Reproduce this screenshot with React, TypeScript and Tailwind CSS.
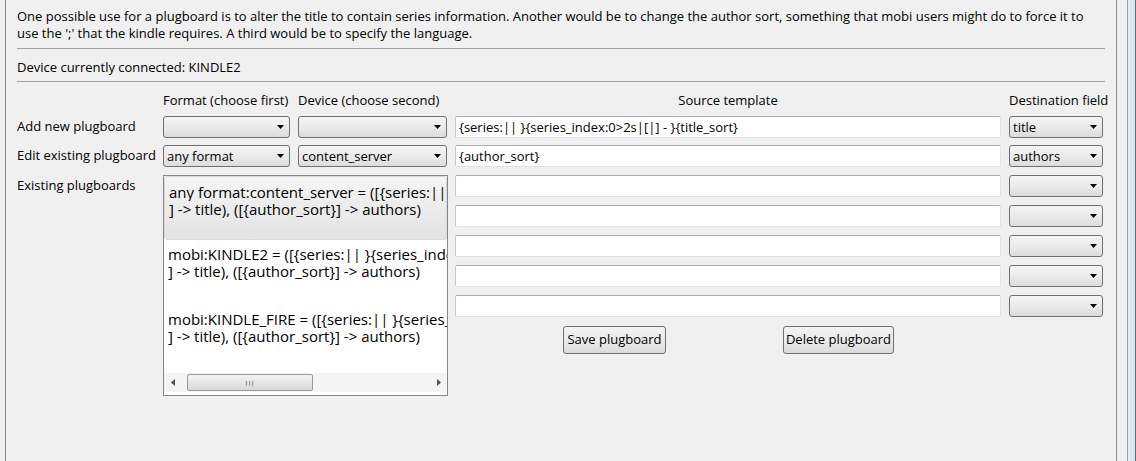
import React from 'react';

const font = "font-['Open_Sans',_'Liberation_Sans',_sans-serif]";

function Arrow() {
  return (
    <svg width="7" height="4" viewBox="0 0 7 4" className="shrink-0">
      <path d="M0 0h7L3.5 4z" fill="#000" />
    </svg>
  );
}

function Combo({ value = '', w }: { value?: string; w: string }) {
  return (
    <div
      className={`${w} h-[22px] shrink-0 flex items-center justify-between pl-[3px] pr-[5px] border border-[#707070] rounded-[3px] bg-gradient-to-b from-[#f4f4f4] via-[#ebebeb] to-[#dcdcdc]`}
    >
      <span className="whitespace-nowrap leading-[18px]">{value}</span>
      <Arrow />
    </div>
  );
}

function TextBox({ value = '' }: { value?: string }) {
  return (
    <div className="w-[546px] h-[22px] shrink-0 flex items-center pl-[3px] bg-white border border-[#dfe3e8] border-t-[#abadb3] border-l-[#c5c9cf] rounded-[2px]">
      <span className="whitespace-pre leading-[18px]">{value}</span>
    </div>
  );
}

function Button({ label, w }: { label: string; w: string }) {
  return (
    <div
      className={`${w} h-[28px] flex items-center justify-center border border-[#707070] rounded-[3px] bg-gradient-to-b from-[#f2f2f2] via-[#ebebeb] to-[#dbdbdb]`}
    >
      {label}
    </div>
  );
}

const plugboards = [
  ['any format:content_server = ([{series:|| }{series_index:0>2s|[|] - }{title_sort}', '] -> title), ([{author_sort}] -> authors)'],
  ['mobi:KINDLE2 = ([{series:|| }{series_index:0>2s|[|] - }{title_sort}', '] -> title), ([{author_sort}] -> authors)'],
  ['mobi:KINDLE_FIRE = ([{series:|| }{series_index:0>2s|[|] - }{title_sort}', '] -> title), ([{author_sort}] -> authors)'],
];

export default function App() {
  return (
    <div className={`w-[1136px] h-[461px] overflow-hidden flex bg-[#f0f0f0] text-black text-[13px] ${font}`}>
      <div className="w-[5px] shrink-0" />
      <div className="w-[1112px] shrink-0 border-l border-r border-[#8a8a8a] pl-[11px] pr-[11px]">
        <p className="pt-[8px] leading-[17px] whitespace-nowrap">
          One possible use for a plugboard is to alter the title to contain series information. Another would be to change the author sort, something that mobi users might do to force it to
          <br />
          use the ';' that the kindle requires. A third would be to specify the language.
        </p>
        <div className="mt-[6px] border-t border-[#a0a0a0]" />
        <p className="mt-[10px] leading-[17px]">Device currently connected: KINDLE2</p>
        <div className="mt-[5px] border-t border-[#a0a0a0]" />

        <div className="grid grid-cols-[138px_127px_149px_546px_94px] gap-x-[8px] mt-[10px]">
          <div />
          <div className="leading-[17px] whitespace-nowrap">Format (choose first)</div>
          <div className="leading-[17px] whitespace-nowrap">Device (choose second)</div>
          <div className="leading-[17px] text-center">Source template</div>
          <div className="leading-[17px] whitespace-nowrap">Destination field</div>

          <div className="h-[22px] mt-[7px] flex items-center whitespace-nowrap">Add new plugboard</div>
          <div className="mt-[7px]"><Combo w="w-[127px]" /></div>
          <div className="mt-[7px]"><Combo w="w-[149px]" /></div>
          <div className="mt-[7px]"><TextBox value="{series:|| }{series_index:0>2s|[|] - }{title_sort}" /></div>
          <div className="mt-[7px]"><Combo w="w-[94px]" value="title" /></div>

          <div className="h-[22px] mt-[7px] flex items-center whitespace-nowrap">Edit existing plugboard</div>
          <div className="mt-[7px]"><Combo w="w-[127px]" value="any format" /></div>
          <div className="mt-[7px]"><Combo w="w-[149px]" value="content_server" /></div>
          <div className="mt-[7px]"><TextBox value="{author_sort}" /></div>
          <div className="mt-[7px]"><Combo w="w-[94px]" value="authors" /></div>
        </div>

        <div className="flex mt-[8px]">
          <div className="w-[146px] shrink-0 h-[22px] flex items-center">Existing plugboards</div>
          <div className="w-[285px] h-[221px] shrink-0 border border-[#828790] bg-white flex flex-col">
            <div className="flex-1 overflow-hidden text-[15px] leading-[17px]">
              {plugboards.map((p, i) => (
                <div
                  key={i}
                  className={`h-[64px] pl-[4px] whitespace-nowrap overflow-hidden ${
                    i === 0
                      ? 'pt-[7px] rounded-[3px] border border-[#d9d9d9] bg-gradient-to-b from-[#f5f5f5] to-[#e3e3e3] pl-[3px]'
                      : 'pt-[5px] mt-[1px]'
                  }`}
                >
                  <div className="overflow-hidden">{p[0]}</div>
                  <div>{p[1]}</div>
                </div>
              ))}
            </div>
            <div className="h-[19px] mb-[3px] flex items-center bg-[#f4f4f4]">
              <div className="w-[17px] flex justify-center">
                <svg width="4" height="7" viewBox="0 0 4 7"><path d="M4 0v7L0 3.5z" fill="#505050" /></svg>
              </div>
              <div className="ml-[6px] w-[126px] h-[17px] rounded-[2px] border border-[#9a9a9a] bg-gradient-to-b from-[#f3f3f3] to-[#d9d9d9] flex items-center justify-center text-[8px] tracking-[1px] text-[#707070] leading-none">
                III
              </div>
              <div className="flex-1" />
              <div className="w-[17px] flex justify-center">
                <svg width="4" height="7" viewBox="0 0 4 7"><path d="M0 0v7L4 3.5z" fill="#505050" /></svg>
              </div>
            </div>
          </div>
          <div className="ml-[7px] flex flex-col">
            {[0, 1, 2, 3, 4].map((i) => (
              <div key={i} className={`flex gap-[8px] ${i ? 'mt-[8px]' : ''}`}>
                <TextBox />
                <Combo w="w-[94px]" />
              </div>
            ))}
            <div className="flex mt-[9px]">
              <div className="ml-[108px]"><Button label="Save plugboard" w="w-[103px]" /></div>
              <div className="ml-[117px]"><Button label="Delete plugboard" w="w-[111px]" /></div>
            </div>
          </div>
        </div>
      </div>
      <div className="w-[10px] shrink-0" />
      <div className="w-[9px] shrink-0 border-l border-r border-l-[#a0a0a0] border-r-[#6a6a6a] bg-gradient-to-r from-[#e4eef8] to-[#cfe2f3]" />
    </div>
  );
}
